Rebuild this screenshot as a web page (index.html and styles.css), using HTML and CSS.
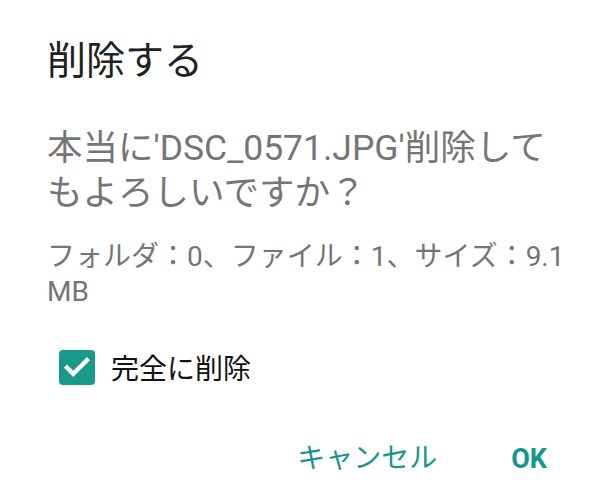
FILE: index.html
```html
<!DOCTYPE html>
<html lang="ja">
<head>
  <meta charset="UTF-8">
  <meta name="viewport" content="width=device-width, initial-scale=1.0">
  <title>削除する</title>
  <link rel="stylesheet" href="styles.css">
</head>
<body>
  <div class="dialog">
    <h1 class="dialog-title">削除する</h1>
    <p class="dialog-message">本当に'DSC_0571.JPG'削除してもよろしいですか？</p>
    <p class="dialog-info">フォルダ：0、ファイル：1、サイズ：9.1 MB</p>

    <label class="check-row">
      <span class="check-box">
        <svg viewBox="0 0 24 24" width="30" height="30">
          <path d="M4 12.5l5 5 11-11" fill="none" stroke="#fff" stroke-width="3.4" stroke-linecap="square"/>
        </svg>
      </span>
      <span class="check-label">完全に削除</span>
    </label>

    <div class="dialog-actions">
      <button type="button" class="btn">キャンセル</button>
      <button type="button" class="btn btn-ok">OK</button>
    </div>
  </div>
</body>
</html>
```

FILE: styles.css
```css
html, body {
  margin: 0;
  padding: 0;
  background: #fff;
}

body {
  font-family: Roboto, "Noto Sans CJK JP", sans-serif;
}

.dialog {
  padding: 38px 39px 0 47px;
}

.dialog-title {
  margin: 0;
  font-size: 39px;
  line-height: 46px;
  font-weight: 400;
  color: #212121;
}

.dialog-message {
  margin: 42px 0 0;
  font-size: 35.5px;
  line-height: 45px;
  color: #757575;
}

.dialog-info {
  margin: 23px 0 0;
  font-size: 28px;
  line-height: 35px;
  color: #757575;
}

.check-row {
  display: flex;
  align-items: center;
  gap: 16px;
  margin: 38px 0 0 12px;
}

.check-box {
  width: 36px;
  height: 35px;
  border-radius: 4px;
  background: #18998a;
  display: flex;
  align-items: center;
  justify-content: center;
}

.check-label {
  font-size: 28px;
  color: #111;
}

.dialog-actions {
  display: flex;
  justify-content: flex-end;
  gap: 74px;
  margin-top: 54px;
  padding-right: 18px;
}

.btn {
  border: none;
  background: none;
  padding: 0;
  font-family: inherit;
  font-size: 28px;
  line-height: 36px;
  color: #14968a;
}

.btn-ok {
  font-weight: 700;
  font-size: 27px;
}
```
